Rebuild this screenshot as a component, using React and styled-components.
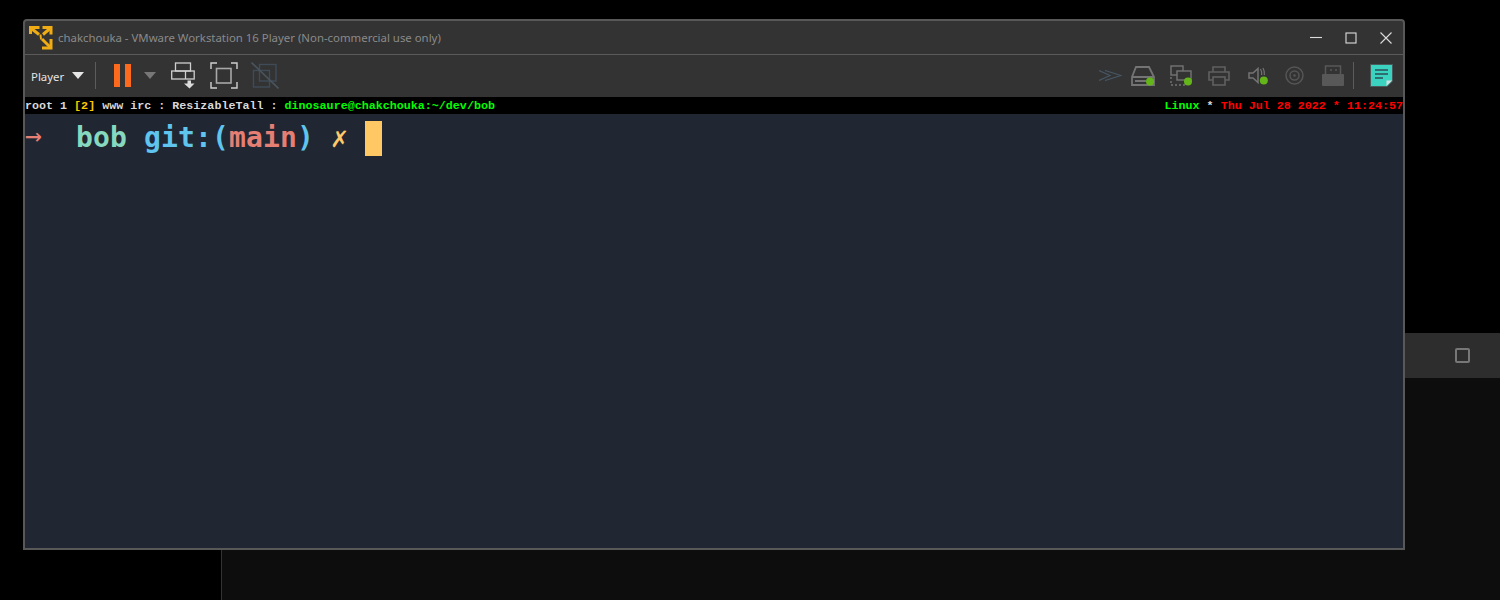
import styled, { createGlobalStyle } from 'styled-components';

const GlobalStyle = createGlobalStyle`
	html, body {
		margin: 0;
		padding: 0;
		background: #000;
	}
`;

function App() {
	return (
		<>
			<GlobalStyle />
			<StDesktop>
				<StBackdrop>
					<StBackdropTop />
					<StStrip>
						<StCheckbox />
					</StStrip>
					<StBackdropBottom />
				</StBackdrop>
				<StWindow>
					<StTitleBar>
						<Logo />
						<StTitle>chakchouka - VMware Workstation 16 Player (Non-commercial use only)</StTitle>
						<StControls>
							<StControlIcon viewBox="0 0 12 12">
								<path d="M0 5.500h12" />
							</StControlIcon>
							<StControlIcon viewBox="0 0 12 12">
								<rect x="1" y="1" width="10" height="10" />
							</StControlIcon>
							<StControlIcon viewBox="0 0 12 12">
								<path d="M.5.5l11 11M11.5.5l-11 11" />
							</StControlIcon>
						</StControls>
					</StTitleBar>
					<StToolbar>
						<StToolGroup>
							<StPlayer>Player</StPlayer>
							<StCaret $color="#e6e6e6" />
							<StDivider $left={11} />
							<StPause>
								<span />
								<span />
							</StPause>
							<StCaret $color="#777" $left={13} />
							<SendKeysIcon />
							<FullscreenIcon />
							<UnityIcon />
						</StToolGroup>
						<StToolGroup>
							<ForwardIcon />
							<DiskIcon />
							<NetworkIcon />
							<PrinterIcon />
							<SoundIcon />
							<CameraIcon />
							<UsbIcon />
							<StDivider $left={9} />
							<NoteIcon />
						</StToolGroup>
					</StToolbar>
					<StStatusBar>
						<span>
							root 1 <StYellow>[2]</StYellow> www irc : ResizableTall : <StGreen>dinosaure@chakchouka:~/dev/bob</StGreen>
						</span>
						<span>
							<StGreen>Linux</StGreen> * <StRed>Thu Jul 28 2022 * 11:24:57</StRed>
						</span>
					</StStatusBar>
					<StTerminal>
						<StArrow>→</StArrow>
						{'  '}
						<StTeal>bob</StTeal> <StBlue>git:(</StBlue>
						<StRedText>main</StRedText>
						<StBlue>)</StBlue> <StAmber>✗</StAmber> <StCursor />
					</StTerminal>
				</StWindow>
			</StDesktop>
		</>
	);
}

function Logo() {
	return (
		<StLogo viewBox="0 0 24 25">
			<g fill="none" stroke="#f0ac14" strokeWidth="3">
				<path d="M1.500 9V2.500h9" />
				<path d="M3 4l7 5.500" />
				<path d="M13.500 2.500h8.500v7" />
				<path d="M21 3.500l-7 6" />
				<path d="M22 14v9h-9" />
				<path d="M21 22l-8-8" />
				<path d="M11.500 9.500l.5 5" strokeWidth="2" />
			</g>
		</StLogo>
	);
}

function SendKeysIcon() {
	return (
		<StIcon width="24" height="27" viewBox="0 0 24 27" $left={15}>
			<g fill="none" stroke="#cfcfcf" strokeWidth="1.300">
				<rect x="4.500" y="1" width="15" height="8" />
				<rect x="0.700" y="9" width="22.500" height="8" />
				<path d="M14.500 9v8" />
			</g>
			<path d="M16.500 18.500h3.500v3h3.500l-5 5-5.500-5h3.500z" fill="#dcdcdc" />
		</StIcon>
	);
}

function FullscreenIcon() {
	return (
		<StIcon width="28" height="27" viewBox="0 0 28 27" $left={15}>
			<path d="M1 7V1h6M21 1h6v6M27 20v6h-6M7 26H1v-6" fill="none" stroke="#d0d0d0" strokeWidth="1.400" />
			<rect x="6.500" y="6.500" width="14.500" height="14.500" fill="none" stroke="#a8a8a8" strokeWidth="1.600" />
		</StIcon>
	);
}

function UnityIcon() {
	return (
		<StIcon width="28" height="27" viewBox="0 0 28 27" $left={13}>
			<g fill="none" stroke="#3f4c58" strokeWidth="1.400">
				<rect x="8.500" y="2.500" width="16.500" height="16.500" />
				<rect x="2.500" y="8.500" width="16" height="16.500" />
			</g>
			<path d="M.5.5l27 26" stroke="#4a545c" strokeWidth="1.600" />
		</StIcon>
	);
}

function ForwardIcon() {
	return (
		<StIcon width="23" height="11" viewBox="0 0 23 11">
			<path d="M0 .5l11 5-11 5M6 .5l16 5-16 5" fill="none" stroke="#475664" strokeWidth="1.200" />
		</StIcon>
	);
}

function DiskIcon() {
	return (
		<StIcon width="24" height="20" viewBox="0 0 24 20" $left={9}>
			<g fill="none" stroke="#747474" strokeWidth="1.800">
				<path d="M5 1h13l5 10v8H1v-8z" />
				<path d="M1 11h22M4 15h11" />
			</g>
			<StLed cx="19" cy="15.500" r="4" />
		</StIcon>
	);
}

function NetworkIcon() {
	return (
		<StIcon width="23" height="21" viewBox="0 0 23 21" $left={15}>
			<g fill="none" stroke="#747474" strokeWidth="1.400">
				<rect x="1" y="1" width="12" height="9" />
				<rect x="7" y="6" width="14" height="9" fill="#333" />
				<path d="M1 12v8h14" strokeDasharray="2 2" />
			</g>
			<StLed cx="18" cy="16.500" r="4" />
		</StIcon>
	);
}

function PrinterIcon() {
	return (
		<StIcon width="22" height="20" viewBox="0 0 22 20" $left={15}>
			<g fill="none" stroke="#606060" strokeWidth="1.600">
				<path d="M5 6V1h12v5" />
				<path d="M5 14H1V6h20v8h-4" />
				<rect x="5" y="11" width="12" height="8" fill="#333" />
			</g>
		</StIcon>
	);
}

function SoundIcon() {
	return (
		<StIcon width="20" height="18" viewBox="0 0 20 18" $left={18}>
			<path d="M1 6h4l5-4.500v14L5 11H1z" fill="none" stroke="#747474" strokeWidth="1.500" />
			<path d="M12.500 2c1 1.500 1.400 4 1.100 6M15 1c1.200 2 1.600 4 1.400 7" fill="none" stroke="#747474" strokeWidth="1.200" />
			<StLed cx="15.800" cy="13.500" r="4" />
		</StIcon>
	);
}

function CameraIcon() {
	return (
		<StIcon width="19" height="19" viewBox="0 0 19 19" $left={17}>
			<g fill="none" stroke="#555" strokeWidth="1.500">
				<circle cx="9.500" cy="9.500" r="8.500" />
				<circle cx="9.500" cy="9.500" r="4.500" />
			</g>
			<circle cx="9.500" cy="9.500" r="1.300" fill="#555" />
		</StIcon>
	);
}

function UsbIcon() {
	return (
		<StIcon width="22" height="21" viewBox="0 0 22 21" $left={18}>
			<rect x="3.500" y="1" width="15" height="10" fill="none" stroke="#585858" strokeWidth="1.500" />
			<path d="M8 5h2M13 5h2" stroke="#585858" strokeWidth="1.500" />
			<rect x="0" y="9" width="22" height="12" rx="1" fill="#585858" />
		</StIcon>
	);
}

function NoteIcon() {
	return (
		<StIcon width="23" height="23" viewBox="0 0 23 23" $left={16}>
			<path d="M.500.500h22v16.500l-5.500 5.500H.500z" fill="#3cd2c0" stroke="#4a5a5a" />
			<path d="M5 6h13M5 10h13M5 14h8" stroke="#2b4e56" strokeWidth="1.500" />
			<path d="M16.500 22v-5.500H22z" fill="#d4dee0" />
		</StIcon>
	);
}

const StDesktop = styled.div`
	position: relative;
	width: 1500px;
	height: 600px;
	overflow: hidden;
	background: #000;
`;

const StBackdrop = styled.div`
	display: flex;
	flex-direction: column;
	height: 100%;
	margin-left: 221px;
`;

const StBackdropTop = styled.div`
	height: 333px;
	background: #000;
`;

const StStrip = styled.div`
	display: flex;
	justify-content: flex-end;
	align-items: center;
	height: 45px;
	padding-right: 30px;
	background: #2d2d2d;
`;

const StBackdropBottom = styled.div`
	flex: 1;
	border-left: 1px solid #333;
	background: #0d0d0d;
`;

const StCheckbox = styled.div`
	box-sizing: border-box;
	width: 15px;
	height: 15px;
	border: 2px solid #777;
	border-radius: 2px;
`;

const StWindow = styled.div`
	position: absolute;
	left: 23px;
	top: 19px;
	box-sizing: border-box;
	display: flex;
	flex-direction: column;
	width: 1382px;
	height: 531px;
	border: 2px solid #585858;
	border-radius: 4px 4px 0 0;
	background: #333;
`;

const StTitleBar = styled.div`
	display: flex;
	align-items: center;
	height: 33px;
	padding-left: 4px;
	border-bottom: 1px solid #5a5a5a;
`;

const StLogo = styled.svg`
	width: 24px;
	height: 25px;
`;

const StTitle = styled.span`
	margin-left: 5px;
	font-family: 'Noto Sans', sans-serif;
	font-size: 11.400px;
	color: #8a8a8a;
`;

const StControls = styled.div`
	display: flex;
	gap: 23px;
	margin-left: auto;
	padding-right: 11px;
`;

const StControlIcon = styled.svg`
	width: 12px;
	height: 12px;
	fill: none;
	stroke: #dcdcdc;
	stroke-width: 1.100;
`;

const StToolbar = styled.div`
	display: flex;
	justify-content: space-between;
	align-items: center;
	height: 41px;
	padding: 0 10px 1px 6px;
`;

const StToolGroup = styled.div`
	display: flex;
	align-items: center;
`;

const StPlayer = styled.span`
	font-family: 'Noto Sans', sans-serif;
	font-size: 11.400px;
	color: #e4e4e4;
	padding-top: 2px;
`;

const StCaret = styled.span`
	width: 0;
	height: 0;
	margin-left: ${(props) => props.$left ?? 8}px;
	border-left: 6.500px solid transparent;
	border-right: 6.500px solid transparent;
	border-top: 7px solid ${(props) => props.$color};
`;

const StDivider = styled.span`
	width: 1px;
	height: 27px;
	margin-left: ${(props) => props.$left}px;
	background: #5c5c5c;
`;

const StPause = styled.div`
	display: flex;
	gap: 5px;
	margin-left: 18px;

	span {
		width: 6px;
		height: 23px;
		background: #fd6a1d;
	}
`;

const StIcon = styled.svg`
	display: block;
	flex-shrink: 0;
	margin-left: ${(props) => props.$left ?? 0}px;
`;

const StLed = styled.circle`
	fill: #64b51a;
`;

const StStatusBar = styled.div`
	display: flex;
	justify-content: space-between;
	align-items: center;
	height: 17px;
	background: #000;
	font-family: 'Liberation Mono', monospace;
	font-size: 11.700px;
	font-weight: 700;
	color: #d8d8d8;
	white-space: pre;
`;

const StYellow = styled.span`
	color: #ffc800;
`;

const StGreen = styled.span`
	color: #00ff00;
`;

const StRed = styled.span`
	color: #ff0000;
`;

const StTerminal = styled.div`
	flex: 1;
	padding: 5px 0 0 0;
	background: #202733;
	font-family: 'DejaVu Sans Mono', monospace;
	font-size: 28px;
	font-weight: 700;
	line-height: 38px;
	letter-spacing: 0.140px;
	white-space: pre;
`;

const StRedText = styled.span`
	color: #e57f73;
`;

const StArrow = styled.span`
	color: #e57f73;
	font-weight: 400;
	line-height: 0;
	vertical-align: 2px;
`;

const StTeal = styled.span`
	color: #86d9bf;
`;

const StBlue = styled.span`
	color: #5fc4ee;
`;

const StAmber = styled.span`
	color: #fec96a;
	font-weight: 400;
`;

const StCursor = styled.span`
	display: inline-block;
	width: 17px;
	height: 35px;
	vertical-align: top;
	margin-top: 2px;
	background: #ffc864;
`;

export default App;
